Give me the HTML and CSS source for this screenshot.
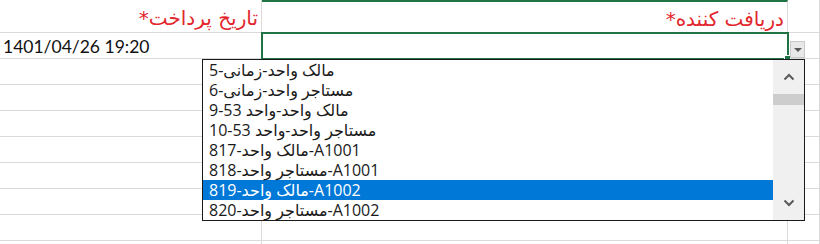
FILE: index.html
```html
<!DOCTYPE html>
<html lang="fa">
<head>
<meta charset="utf-8">
<title>Sheet</title>
<link rel="stylesheet" href="styles.css">
</head>
<body>
<div class="sheet">
  <div class="grid">
    <div class="cell head" dir="rtl">تاریخ پرداخت*</div>
    <div class="cell head head-main" dir="rtl">دریافت کننده*</div>
    <div class="cell"></div>

    <div class="cell date">1401/04/26 19:20</div>
    <div class="cell"></div>
    <div class="cell"></div>

    <div class="cell"></div><div class="cell"></div><div class="cell"></div>
    <div class="cell"></div><div class="cell"></div><div class="cell"></div>
    <div class="cell"></div><div class="cell"></div><div class="cell"></div>
    <div class="cell"></div><div class="cell"></div><div class="cell"></div>
    <div class="cell"></div><div class="cell"></div><div class="cell"></div>
    <div class="cell"></div><div class="cell"></div><div class="cell"></div>
    <div class="cell"></div><div class="cell"></div><div class="cell"></div>
    <div class="cell"></div><div class="cell"></div><div class="cell"></div>
  </div>

  <div class="selection"><span class="handle"></span></div>
  <div class="dd-button"><span class="dd-tri"></span></div>

  <div class="dropdown">
    <ul class="items">
      <li class="item">5-مالک واحد-زمانی</li>
      <li class="item">6-مستاجر واحد-زمانی</li>
      <li class="item">9-مالک واحد-واحد 53</li>
      <li class="item">10-مستاجر واحد-واحد 53</li>
      <li class="item">817-مالک واحد-A1001</li>
      <li class="item">818-مستاجر واحد-A1001</li>
      <li class="item item-selected">819-مالک واحد-A1002</li>
      <li class="item">820-مستاجر واحد-A1002</li>
    </ul>
    <div class="scrollbar">
      <div class="sb-btn">
        <svg width="12" height="8" viewBox="0 0 12 8"><path d="M1.5 6.5 L6 2 L10.5 6.5" fill="none" stroke="#5a5a5a" stroke-width="2"/></svg>
      </div>
      <div class="sb-thumb"></div>
      <div class="sb-track"></div>
      <div class="sb-btn">
        <svg width="12" height="8" viewBox="0 0 12 8"><path d="M1.5 1.5 L6 6 L10.5 1.5" fill="none" stroke="#5a5a5a" stroke-width="2"/></svg>
      </div>
    </div>
  </div>
</div>
</body>
</html>
```
FILE: styles.css
```css
html, body {
  margin: 0;
  padding: 0;
  background: #ffffff;
}

.sheet {
  position: relative;
  width: 820px;
  height: 244px;
  overflow: hidden;
  font-family: Lato, "DejaVu Sans", sans-serif;
}

.grid {
  display: grid;
  grid-template-columns: 262px 526px 32px;
  grid-template-rows: 33px repeat(9, 26px);
}

.cell {
  box-sizing: border-box;
  border-right: 1px solid #dadada;
  border-bottom: 1px solid #dadada;
  overflow: hidden;
  white-space: nowrap;
}

.head {
  color: #e3262d;
  font-family: "DejaVu Sans", sans-serif;
  font-size: 20px;
  line-height: 36px;
  padding-right: 3px;
  text-align: right;
}

.head-main {
  border-top: 2px solid #217346;
  border-bottom: none;
  line-height: 34px;
}

.date {
  font-size: 17.5px;
  line-height: 28px;
  padding-left: 3px;
  color: #111;
}

.selection {
  position: absolute;
  left: 261px;
  top: 32px;
  width: 528px;
  height: 28px;
  box-sizing: border-box;
  border: 2px solid #217346;
}

.handle {
  position: absolute;
  right: -4px;
  bottom: -4px;
  width: 5px;
  height: 5px;
  background: #217346;
  border: 1px solid #ffffff;
}

.dd-button {
  position: absolute;
  left: 790px;
  top: 41px;
  width: 15px;
  height: 17px;
  box-sizing: border-box;
  background: #e8e8e8;
  border: 1px solid #c9c9c9;
  display: flex;
  align-items: center;
  justify-content: center;
}

.dd-tri {
  width: 0;
  height: 0;
  border-left: 4px solid transparent;
  border-right: 4px solid transparent;
  border-top: 4px solid #5a5a5a;
}

.dropdown {
  position: absolute;
  left: 202px;
  top: 59px;
  width: 603px;
  height: 162px;
  box-sizing: border-box;
  border: 1px solid #1a1a1a;
  background: #ffffff;
  display: flex;
}

.items {
  list-style: none;
  margin: 0;
  padding: 0;
  flex: 1;
}

.item {
  height: 20px;
  line-height: 20px;
  padding-left: 6px;
  font-family: "Open Sans", "DejaVu Sans", sans-serif;
  font-size: 16px;
  color: #1a1a1a;
  white-space: nowrap;
}

.item-selected {
  background: #0078d7;
  color: #ffffff;
}

.scrollbar {
  width: 31px;
  background: #f0f0f0;
  display: flex;
  flex-direction: column;
}

.sb-btn {
  height: 34px;
  display: flex;
  align-items: center;
  justify-content: center;
}

.sb-thumb {
  height: 11px;
  background: #cdcdcd;
}

.sb-track {
  flex: 1;
}
```
